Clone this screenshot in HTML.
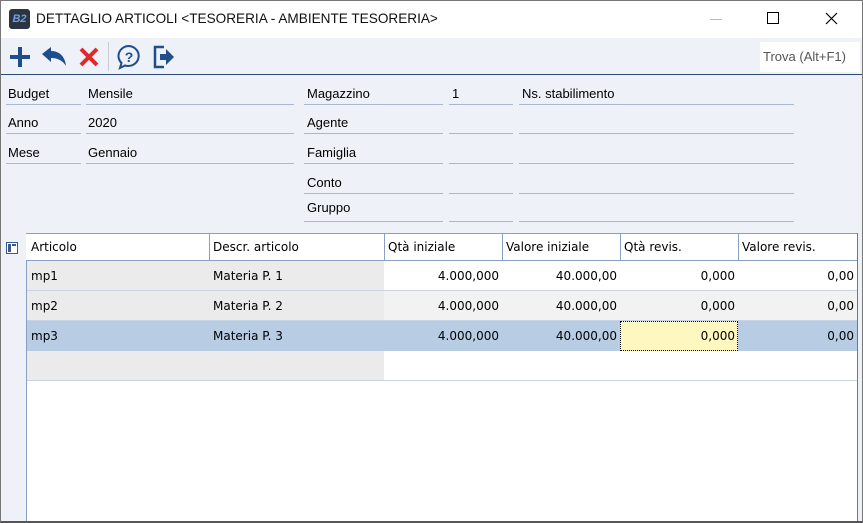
<!DOCTYPE html><html><head><meta charset="utf-8"><style>
*{margin:0;padding:0;box-sizing:border-box}
body{width:863px;height:523px;overflow:hidden;background:#fff;font-family:"Liberation Sans",sans-serif;font-size:13px;color:#000;position:relative}
.a{position:absolute}
.frame{left:0;top:0;width:863px;height:523px;border:1px solid #777;border-bottom:2px solid #555}
.ul{position:absolute;height:1px;background:#a8b8d0}
.lbl{position:absolute;font-size:13px}
.cell{position:absolute;height:30px;line-height:30px;font-family:"DejaVu Sans",sans-serif;font-size:12px;padding:0 3px;white-space:nowrap}
.r{text-align:right}
</style></head><body>
<div class="a" style="left:0;top:0;width:863px;height:38px;background:#fff"></div>
<div class="a" style="left:9px;top:9px;width:21px;height:20px;background:#2c3442;border-radius:3px;color:#6da0e8;font-size:11px;font-weight:bold;font-style:italic;line-height:20px;text-align:center">B2</div>
<div class="a" style="left:36px;top:11px;font-size:13.6px;color:#111">DETTAGLIO ARTICOLI &lt;TESORERIA - AMBIENTE TESORERIA&gt;</div>
<div class="a" style="left:710px;top:19px;width:12px;height:1px;background:#bbb"></div>
<div class="a" style="left:767px;top:12px;width:12px;height:12px;border:1px solid #000"></div>
<svg class="a" style="left:825px;top:12px" width="13" height="13"><path d="M1 1L12 12M12 1L1 12" stroke="#000" stroke-width="1.2"/></svg>
<div class="a" style="left:0;top:38px;width:863px;height:37px;background:#eef1f8;border-bottom:1px solid #2d4a78"></div>
<svg class="a" style="left:8px;top:45px" width="24" height="24"><path d="M12 2V22M2 12H22" stroke="#1f4e8c" stroke-width="4"/></svg>
<svg class="a" style="left:40px;top:46px" width="28" height="22"><path d="M2 8L11 1V5C19 5 25 10 26 20C23 15 18 12 11 12V16Z" fill="#1f4e8c"/></svg>
<svg class="a" style="left:78px;top:46px" width="22" height="22"><path d="M3 3L19 19M19 3L3 19" stroke="#e02828" stroke-width="4"/></svg>
<div class="a" style="left:108px;top:42px;width:1px;height:29px;background:#c8ccd4"></div>
<svg class="a" style="left:116px;top:44px" width="26" height="26"><path d="M13 2A10.5 10 0 1 1 9 21.5L4 24L5.5 19A10.5 10 0 0 1 13 2Z" fill="none" stroke="#1f4e8c" stroke-width="2"/><text x="13" y="18" font-size="14" font-weight="bold" text-anchor="middle" fill="#1f4e8c" font-family="Liberation Sans">?</text></svg>
<svg class="a" style="left:152px;top:44px" width="24" height="26"><path d="M12 3H3V23H12" fill="none" stroke="#1f4e8c" stroke-width="2.5"/><path d="M8 10H14V5L22 13L14 21V16H8Z" fill="#1f4e8c"/></svg>
<div class="a" style="left:760px;top:42px;width:100px;height:30px;background:#fff;color:#555;line-height:30px;padding-left:3px">Trova (Alt+F1)</div>
<div class="a" style="left:0;top:75px;width:863px;height:448px;background:#eef1f8"></div>
<div class="lbl" style="left:8px;top:86px">Budget</div><div class="lbl" style="left:88px;top:86px">Mensile</div>
<div class="lbl" style="left:8px;top:115px">Anno</div><div class="lbl" style="left:88px;top:115px">2020</div>
<div class="lbl" style="left:8px;top:145px">Mese</div><div class="lbl" style="left:88px;top:145px">Gennaio</div>
<div class="ul" style="left:6px;top:104px;width:75px"></div><div class="ul" style="left:86px;top:104px;width:208px"></div>
<div class="ul" style="left:6px;top:133px;width:75px"></div><div class="ul" style="left:86px;top:133px;width:208px"></div>
<div class="ul" style="left:6px;top:163px;width:75px"></div><div class="ul" style="left:86px;top:163px;width:208px"></div>
<div class="lbl" style="left:307px;top:86px">Magazzino</div><div class="lbl" style="left:452px;top:86px">1</div><div class="lbl" style="left:522px;top:86px">Ns. stabilimento</div>
<div class="lbl" style="left:307px;top:115px">Agente</div>
<div class="lbl" style="left:307px;top:145px">Famiglia</div>
<div class="lbl" style="left:307px;top:175px">Conto</div>
<div class="lbl" style="left:307px;top:200px">Gruppo</div>
<div class="ul" style="left:304px;top:104px;width:139px"></div><div class="ul" style="left:449px;top:104px;width:64px"></div><div class="ul" style="left:519px;top:104px;width:275px"></div>
<div class="ul" style="left:304px;top:133px;width:139px"></div><div class="ul" style="left:449px;top:133px;width:64px"></div><div class="ul" style="left:519px;top:133px;width:275px"></div>
<div class="ul" style="left:304px;top:163px;width:139px"></div><div class="ul" style="left:449px;top:163px;width:64px"></div><div class="ul" style="left:519px;top:163px;width:275px"></div>
<div class="ul" style="left:304px;top:193px;width:139px"></div><div class="ul" style="left:449px;top:193px;width:64px"></div><div class="ul" style="left:519px;top:193px;width:275px"></div>
<div class="ul" style="left:304px;top:221px;width:139px"></div><div class="ul" style="left:449px;top:221px;width:64px"></div><div class="ul" style="left:519px;top:221px;width:275px"></div>
<svg class="a" style="left:6px;top:242px" width="12" height="12"><rect x="0.5" y="0.5" width="11" height="11" fill="#fff" stroke="#3a5a8c"/><rect x="2" y="2" width="3" height="8" fill="#3a5a8c"/><rect x="6" y="2" width="4" height="2" fill="#3a5a8c"/></svg>
<div class="a" style="left:26px;top:233px;width:832px;height:290px;background:#fff;border-left:1px solid #8aa0c0"></div>
<div class="a" style="left:857px;top:233px;width:1px;height:290px;background:#6a7a90"></div>
<div class="a" style="left:26px;top:233px;width:831px;height:28px;background:#fff;border-top:1px solid #8aa0c0;border-bottom:1px solid #8aa0c0"></div>
<div class="a" style="left:27px;top:261px;width:357px;height:119px;background:#ebebeb"></div>
<div class="a" style="left:384px;top:291px;width:473px;height:30px;background:#f2f2f2"></div>
<div class="a" style="left:27px;top:321px;width:830px;height:30px;background:#b8cce4"></div>
<div class="a" style="left:620px;top:321px;width:118px;height:30px;background:#fff7c0;border:1px dotted #000"></div>
<div class="ul" style="left:27px;top:290px;width:830px;background:#c8d4e6"></div>
<div class="ul" style="left:27px;top:320px;width:830px;background:#c8d4e6"></div>
<div class="ul" style="left:27px;top:380px;width:830px;background:#c8d4e6"></div>
<div class="a" style="left:209px;top:234px;width:1px;height:26px;background:#8aa0c0"></div>
<div class="a" style="left:384px;top:234px;width:1px;height:26px;background:#8aa0c0"></div>
<div class="a" style="left:502px;top:234px;width:1px;height:26px;background:#8aa0c0"></div>
<div class="a" style="left:620px;top:234px;width:1px;height:26px;background:#8aa0c0"></div>
<div class="a" style="left:738px;top:234px;width:1px;height:26px;background:#8aa0c0"></div>
<div class="cell" style="left:28px;top:232px">Articolo</div><div class="cell" style="left:210px;top:232px">Descr. articolo</div><div class="cell" style="left:385px;top:232px">Qtà iniziale</div><div class="cell" style="left:503px;top:232px">Valore iniziale</div><div class="cell" style="left:621px;top:232px">Qtà revis.</div><div class="cell" style="left:739px;top:232px">Valore revis.</div>
<div class="cell" style="left:28px;top:261px">mp1</div><div class="cell" style="left:210px;top:261px">Materia P. 1</div><div class="cell r" style="left:384px;top:261px;width:118px">4.000,000</div><div class="cell r" style="left:502px;top:261px;width:118px">40.000,00</div><div class="cell r" style="left:620px;top:261px;width:118px">0,000</div><div class="cell r" style="left:738px;top:261px;width:119px">0,00</div>
<div class="cell" style="left:28px;top:291px">mp2</div><div class="cell" style="left:210px;top:291px">Materia P. 2</div><div class="cell r" style="left:384px;top:291px;width:118px">4.000,000</div><div class="cell r" style="left:502px;top:291px;width:118px">40.000,00</div><div class="cell r" style="left:620px;top:291px;width:118px">0,000</div><div class="cell r" style="left:738px;top:291px;width:119px">0,00</div>
<div class="cell" style="left:28px;top:321px">mp3</div><div class="cell" style="left:210px;top:321px">Materia P. 3</div><div class="cell r" style="left:384px;top:321px;width:118px">4.000,000</div><div class="cell r" style="left:502px;top:321px;width:118px">40.000,00</div><div class="cell r" style="left:620px;top:321px;width:118px">0,000</div><div class="cell r" style="left:738px;top:321px;width:119px">0,00</div>
<div class="a frame"></div>
</body></html>
